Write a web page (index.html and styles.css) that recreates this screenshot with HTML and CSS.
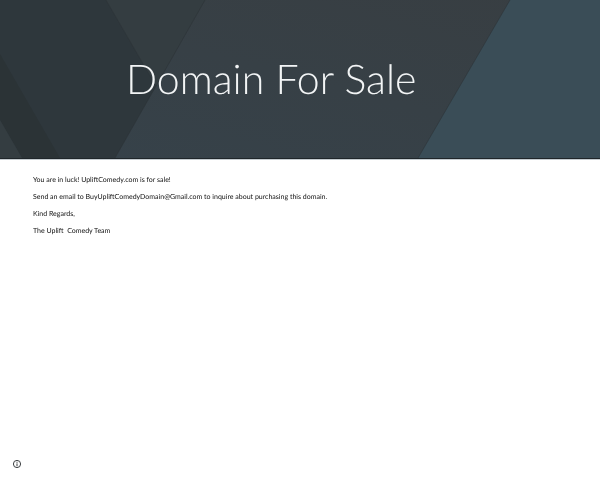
FILE: index.html
```html
<!DOCTYPE html>
<html lang="en">
<head>
<meta charset="utf-8">
<title>Domain For Sale</title>
<link rel="stylesheet" href="styles.css">
</head>
<body>
<header class="banner">
  <svg class="banner-art" viewBox="0 0 600 158" preserveAspectRatio="none" aria-hidden="true">
    <defs>
      <linearGradient id="base-fade" x1="0" y1="1" x2="1" y2="0">
        <stop class="fade-start" offset="0"/>
        <stop class="fade-end" offset="1"/>
      </linearGradient>
    </defs>
    <rect fill="url(#base-fade)" width="600" height="158"/>
    <polygon class="art-right" points="510,0 600,0 600,158 418,158"/>
    <polygon class="art-left" points="0,0 106,0 156,86 205,0 115,158 0,158"/>
    <polygon class="art-mid" points="106,0 205,0 156,86"/>
    <polygon class="art-band" points="0,54 60,158 22,158 0,120"/>
    <polygon class="art-mid" points="0,120 22,158 0,158"/>
    <path class="art-edge" d="M510 0 418 158M205 0 115 158M106 0 156 86"/>
  </svg>
  <h1 class="banner-title">Domain For Sale</h1>
</header>
<main class="content">
  <p>You are in luck! UpliftComedy.com is for sale!</p>
  <p>Send an email to BuyUpliftComedyDomain@Gmail.com to inquire about purchasing this domain.</p>
  <p>Kind Regards,</p>
  <p>The Uplift&nbsp; Comedy Team</p>
</main>
<footer class="info">
  <svg class="info-icon" viewBox="0 0 10 10" aria-hidden="true">
    <circle class="info-ring" cx="5" cy="5" r="3.6"/>
    <rect class="info-mark" x="4.5" y="2.8" width="1" height="1"/>
    <rect class="info-mark" x="4.5" y="4.4" width="1" height="2.8"/>
  </svg>
</footer>
</body>
</html>
```

FILE: styles.css
```css
html, body {
  margin: 0;
  height: 100%;
  background: #fff;
}
body {
  display: flex;
  flex-direction: column;
  height: 480px;
  overflow: hidden;
  font-family: Lato, "Liberation Sans", sans-serif;
  color: #111;
  text-rendering: geometricPrecision;
}
.banner {
  position: relative;
  height: 158px;
  flex: none;
  display: flex;
  align-items: center;
  border-bottom: 1px solid #1f262a;
  box-shadow: 0 1px 0 #c5ccd0;
}
.banner-art {
  position: absolute;
  inset: 0;
  width: 100%;
  height: 100%;
}
.fade-start { stop-color: #36424a; }
.fade-end { stop-color: #383e42; }
.art-right { fill: #3a4d57; }
.art-left { fill: #2e373c; }
.art-mid { fill: #343d41; }
.art-band { fill: #2b3336; }
.art-edge {
  fill: none;
  stroke: #2b3235;
  stroke-opacity: 0.5;
  stroke-width: 1;
}
.banner-title {
  position: relative;
  margin: 0 0 0 126px;
  font-size: 41px;
  line-height: 52px;
  font-weight: 300;
  color: #f2f4f5;
  white-space: nowrap;
  will-change: opacity;
}
.content {
  flex: 1;
  padding: 13px 33px 0;
  font-size: 7px;
  line-height: 17px;
  will-change: opacity;
}
.content p {
  margin: 0;
}
.info {
  flex: none;
  height: 32px;
  padding-left: 12px;
}
.info-icon {
  display: block;
  width: 10px;
  height: 10px;
  margin-top: 11px;
}
.info-ring {
  fill: none;
  stroke: #3c4043;
  stroke-width: 1;
}
.info-mark { fill: #3c4043; }
```
